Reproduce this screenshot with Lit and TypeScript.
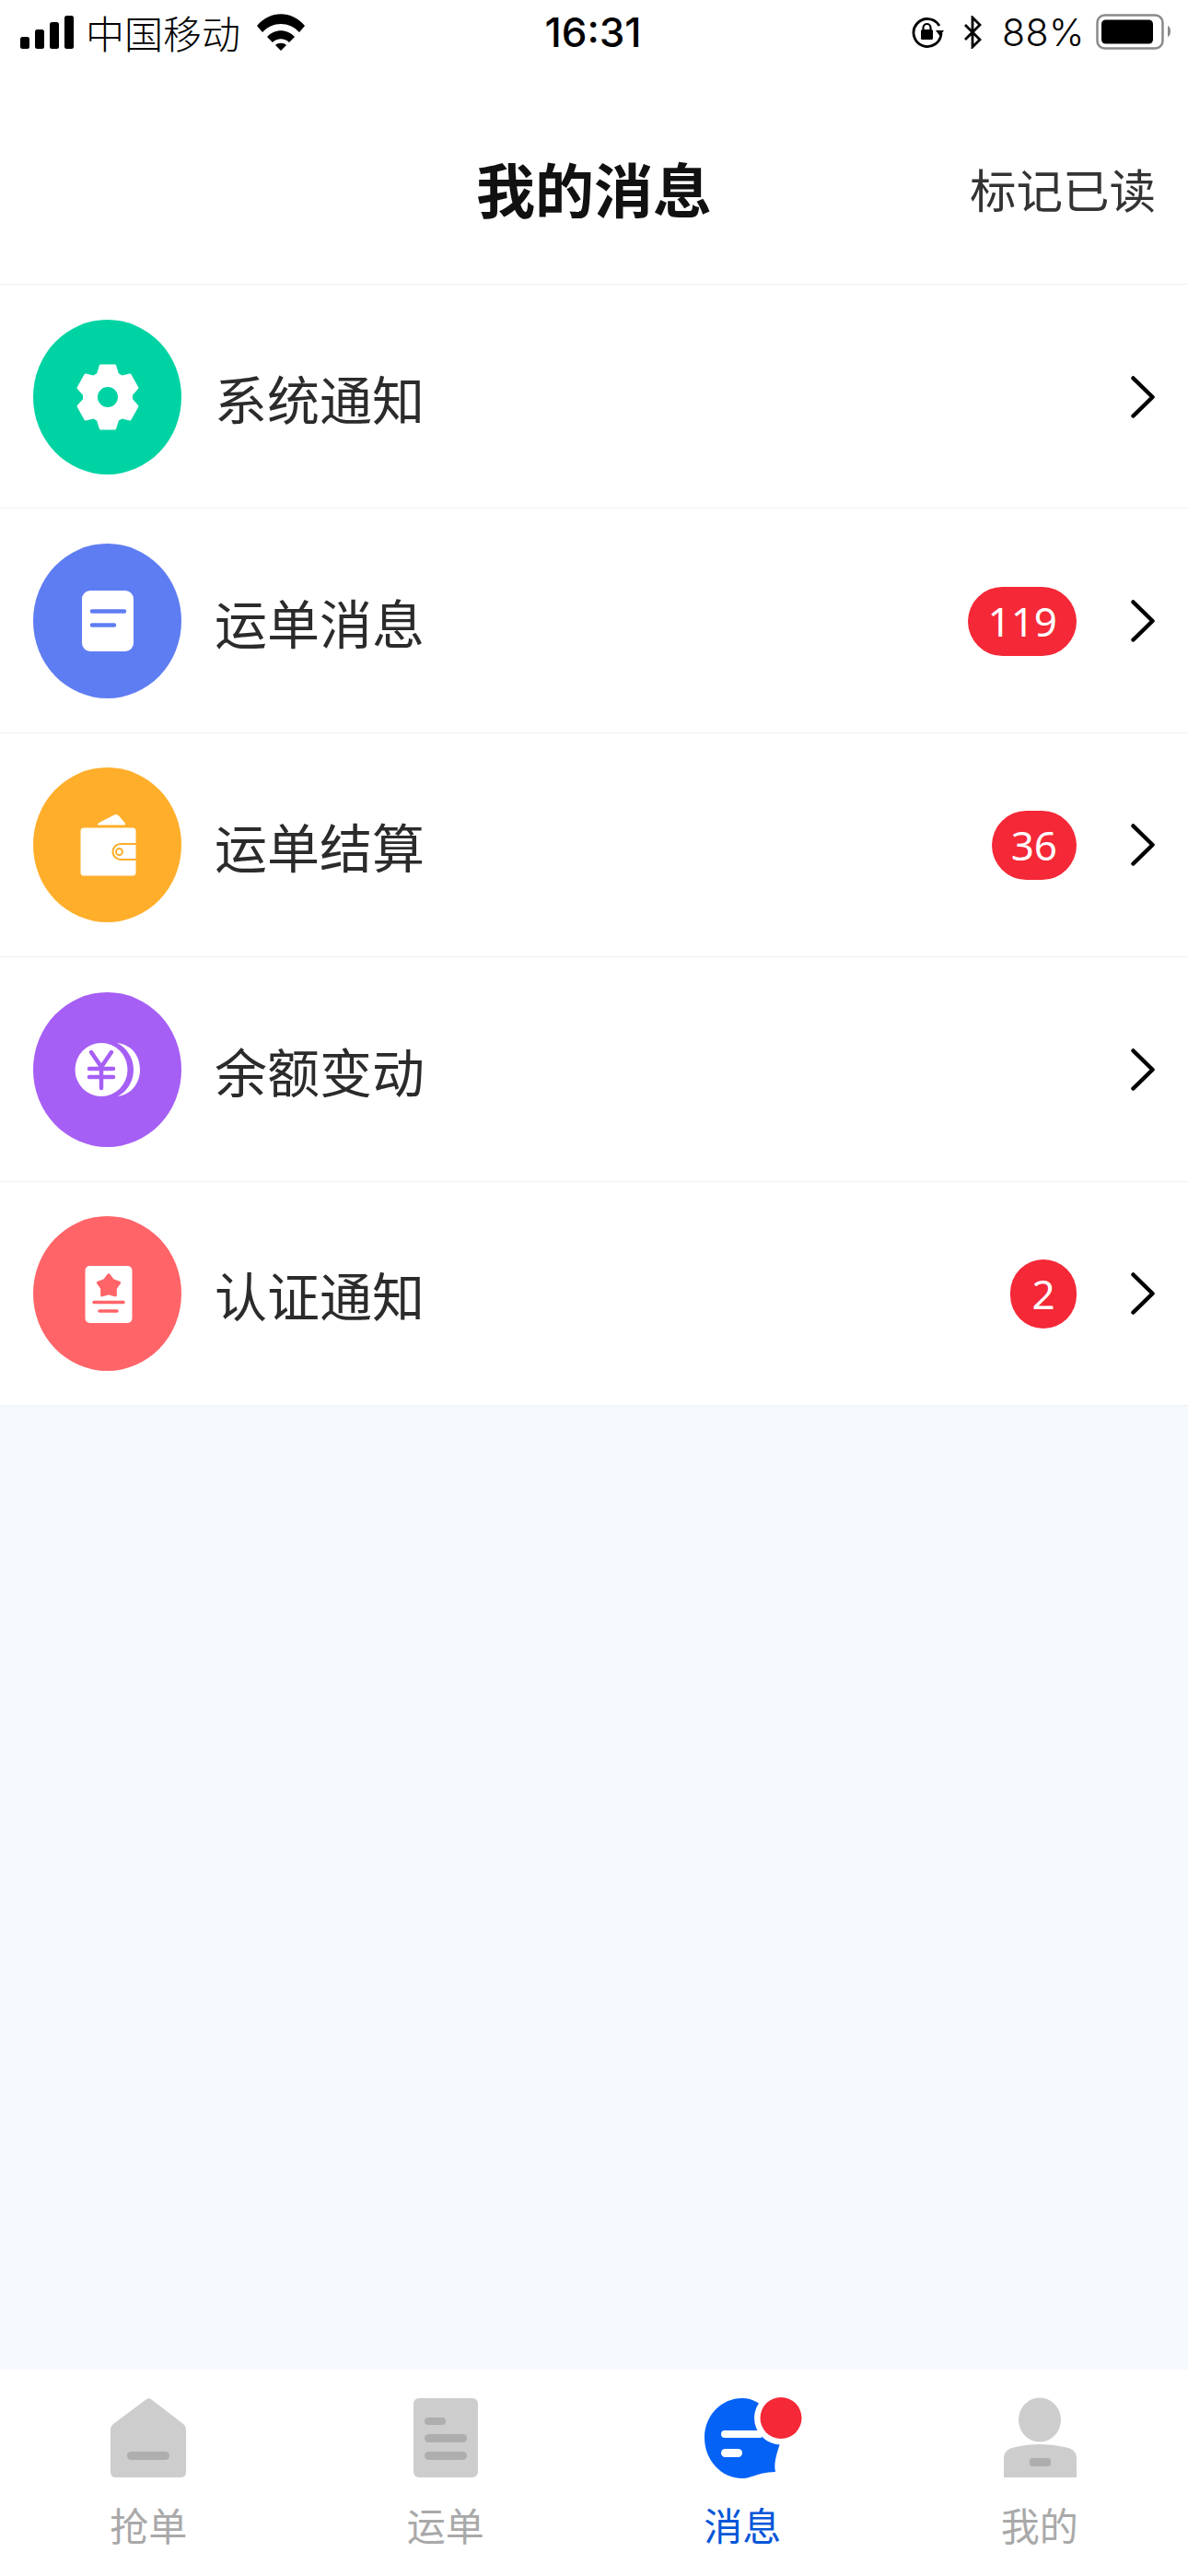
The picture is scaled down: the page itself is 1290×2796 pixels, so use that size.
import { LitElement, html, css, svg } from "lit";
import { customElement } from "lit/decorators.js";

const GEAR = (() => {
  const pts: string[] = [];
  for (let i = 0; i < 6; i++) {
    const a = (i * 60 - 90) * Math.PI / 180;
    const w = 0.235;
    const g = 0.42;
    const R = 35, r = 27;
    const p = (ang: number, rad: number) =>
      `${(40 + rad * Math.cos(ang) * 0.95).toFixed(1)} ${(40 + rad * Math.sin(ang)).toFixed(1)}`;
    pts.push(`${i === 0 ? "M" : "L"}${p(a - g, r)}`, `L${p(a - w, R)}`, `L${p(a + w, R)}`, `L${p(a + g, r)}`);
  }
  return pts.join(" ") + "Z";
})();

const STAR = (() => {
  const out: string[] = [];
  for (let i = 0; i < 10; i++) {
    const a = (i * 36 - 90) * Math.PI / 180;
    const rad = i % 2 === 0 ? 12 : 7.5;
    out.push(`${i === 0 ? "M" : "L"}${(41 + rad * Math.cos(a)).toFixed(1)} ${(32 + rad * Math.sin(a)).toFixed(1)}`);
  }
  return out.join(" ") + "Z";
})();

const ICONS = {
  gear: svg`<svg class="glyph" width="80" height="80" viewBox="0 0 80 80"><path fill-rule="evenodd" fill="#fff" stroke="#fff" stroke-width="3" stroke-linejoin="round" d="${GEAR} M40 27.500a12.500 12.500 0 1 0 0 25a12.500 12.500 0 1 0 0-25Z"/></svg>`,
  doc: svg`<svg class="glyph" width="80" height="80" viewBox="0 0 80 80"><rect x="12" y="7" width="56" height="66" rx="9" fill="#fff"/><path d="M23 29.500H58M23 44.500H47" stroke="#5f7df2" stroke-width="4.500" stroke-linecap="round"/></svg>`,
  wallet: svg`<svg class="glyph" width="80" height="80" viewBox="0 0 80 80"><rect x="10.500" y="21.500" width="60" height="52" rx="3.500" fill="#fff"/><path d="M71 39H54a8.500 8.500 0 0 0 0 17h17" fill="none" stroke="#ffae2b" stroke-width="2"/><circle cx="52.500" cy="47.500" r="3.500" fill="none" stroke="#ffae2b" stroke-width="2"/><path fill="#fff" d="M28.500 18.500q1-2 3-3L47 7.500q3-1.500 5 1L58.500 16q1.500 2.500-1 2.500Z"/></svg>`,
  coin: svg`<svg class="glyph" width="80" height="80" viewBox="0 0 80 80"><ellipse cx="33" cy="40" rx="28.500" ry="29" fill="#fff"/><path fill="#fff" d="M50 11c17 2 25 15 25 29s-9 27-24 29c11-6 17-17 17-29s-7-24-18-29Z"/><path d="M22 21l11 16l11-16M33 37v23M20 39h26M20 48h26" fill="none" stroke="#a65ff5" stroke-width="4.500" stroke-linecap="round" stroke-linejoin="round"/></svg>`,
  cert: svg`<svg class="glyph" width="80" height="80" viewBox="0 0 80 80"><rect x="15.500" y="10" width="51" height="62" rx="5" fill="#fff"/><path d="${STAR}" fill="#ff6468" stroke="#ff6468" stroke-width="3.500" stroke-linejoin="round"/><path d="M25 49.500H57M31 59H50" stroke="#ff6468" stroke-width="3.500" stroke-linecap="round"/></svg>`,
};

const ROWS = [
  { name: "系统通知", color: "#00d3a3", icon: ICONS.gear, badge: "" },
  { name: "运单消息", color: "#5f7df2", icon: ICONS.doc, badge: "119" },
  { name: "运单结算", color: "#ffae2b", icon: ICONS.wallet, badge: "36" },
  { name: "余额变动", color: "#a65ff5", icon: ICONS.coin, badge: "" },
  { name: "认证通知", color: "#ff6468", icon: ICONS.cert, badge: "2" },
];

@customElement("app-root")
export class AppRoot extends LitElement {
  static styles = css`
    :host {
      display: flex;
      flex-direction: column;
      width: 1290px;
      height: 2796px;
      background: #fff;
      font-family: "Noto Sans CJK SC", "Noto Sans", sans-serif;
      overflow: hidden;
    }
    .status {
      height: 70px;
      flex: none;
      display: grid;
      grid-template-columns: 1fr auto 1fr;
      align-items: center;
      color: #000;
      padding: 0 19px 0 22px;
      box-sizing: border-box;
    }
    .status-l { display: flex; align-items: center; gap: 13px; font-size: 42px; font-weight: 300; line-height: 50px; }
    .status-l .wifi { margin-left: 5px; }
    .time { font: 500 44px/50px Inter, "Liberation Sans", sans-serif; margin-right: 5px; }
    .status-r { display: flex; align-items: center; justify-content: flex-end; }
    .pct { font: 300 41px/50px Inter, "Liberation Sans", sans-serif; margin: 0 12px 0 22px; letter-spacing: 0.500px; }
    .bt { margin-left: 21px; }
    .header {
      height: 239px;
      flex: none;
      box-sizing: border-box;
      border-bottom: 1.500px solid #efefef;
      display: grid;
      grid-template-columns: 1fr auto 1fr;
      align-items: center;
      padding: 28px 35px 0;
    }
    .title { grid-column: 2; font-size: 64px; font-weight: 700; color: #111; line-height: 80px; }
    .mark { justify-self: end; font-size: 50.500px; font-weight: 400; color: #333; line-height: 70px; margin-top: 2px; }
    .row {
      height: 243.400px;
      box-sizing: border-box;
      flex: none;
      display: flex;
      align-items: center;
      padding: 1px 36px 0 36px;
      border-bottom: 1.500px solid #f2f2f2;
      background: #fff;
    }
    .row:last-child { border-bottom: 0; }
    .circle {
      width: 161px;
      height: 168px;
      border-radius: 50%;
      flex: none;
      display: flex;
      align-items: center;
      justify-content: center;
    }
    .glyph { display: block; flex: none; }
    .name { margin-left: 36px; flex: 1; font-size: 57px; font-weight: 400; color: #2b2b2b; line-height: 70px; }
    .badge {
      height: 75px;
      min-width: 72px;
      box-sizing: border-box;
      padding: 0 21px;
      border-radius: 38px;
      background: #f42837;
      color: #fff;
      font: 400 44px/75px "Noto Sans", sans-serif;
      text-align: center;
      flex: none;
    }
    .badge.single { padding: 0; }
    .chev { margin-left: 59px; flex: none; display: block; }
    .fill { flex: 1; background: #f6f9fe; }
    .tabs {
      height: 224px;
      flex: none;
      background: #fff;
      display: grid;
      grid-template-columns: repeat(4, 1fr);
    }
    .tab { display: flex; flex-direction: column; align-items: center; padding-top: 30px; }
    .tab svg { display: block; }
    .tab svg.msg { margin-left: 24px; }
    .tab span { margin-top: 25px; font-size: 42px; font-weight: 400; line-height: 50px; color: #a9a9a9; }
    .tab.active span { color: #0556d8; }
  `;

  render() {
    return html`
      <div class="status">
        <div class="status-l">
          <svg width="58" height="36" viewBox="0 0 58 36"><g fill="#000"><rect x="0" y="23" width="10" height="13" rx="2.500"/><rect x="16" y="15" width="10" height="21" rx="2.500"/><rect x="32" y="7" width="10" height="29" rx="2.500"/><rect x="48" y="0" width="10" height="36" rx="2.500"/></g></svg>
          <span>中国移动</span>
          <svg class="wifi" width="52" height="40" viewBox="0 0 52 40"><g fill="#000"><path d="M0 13C14-4 38-4 52 13l-6 7C35 8 17 8 6 20Z"/><path d="M11 25c8-9 22-9 30 0l-6 6c-5-5-13-5-18 0Z"/><path d="M20 34c3-3 9-3 12 0l-6 6Z"/></g></svg>
        </div>
        <div class="time">16:31</div>
        <div class="status-r">
          <svg width="36" height="36" viewBox="0 0 36 36"><path d="M31 11A15 15 0 1 0 33 19" fill="none" stroke="#000" stroke-width="2.800"/><path d="M27 16h9l-4.500 6Z" fill="#000"/><rect x="11" y="15" width="13" height="11" rx="1.500" fill="#000"/><path d="M13.500 16v-3a4 4 0 0 1 8 0v3" fill="none" stroke="#000" stroke-width="2.200"/></svg>
          <svg class="bt" width="20" height="36" viewBox="0 0 20 36"><path d="M2 10l16 16l-8 8V2l8 8L2 26" fill="none" stroke="#000" stroke-width="2.800"/></svg>
          <span class="pct">88%</span>
          <svg width="81" height="40" viewBox="0 0 81 40"><rect x="1.500" y="1.500" width="71" height="36" rx="8" fill="#fff" stroke="#8a8a8a" stroke-width="2.500"/><rect x="6" y="6.500" width="56" height="26" rx="4.500" fill="#000"/><path d="M78 13q3 1 3 6t-3 6Z" fill="#8a8a8a"/></svg>
        </div>
      </div>
      <div class="header">
        <div class="title">我的消息</div>
        <div class="mark">标记已读</div>
      </div>
      ${ROWS.map(
        (r) => html`
          <div class="row">
            <div class="circle" style="background:${r.color}">${r.icon}</div>
            <div class="name">${r.name}</div>
            ${r.badge ? html`<div class="badge ${r.badge.length === 1 ? "single" : ""}">${r.badge}</div>` : ""}
            <svg class="chev" width="26" height="46" viewBox="0 0 26 46"><path d="M2.500 2.500L23.500 23L2.500 43.500" fill="none" stroke="#000" stroke-width="4.500" stroke-linecap="round" stroke-linejoin="round"/></svg>
          </div>
        `
      )}
      <div class="fill"></div>
      <div class="tabs">
        <div class="tab">
          <svg width="100" height="88" viewBox="0 0 100 88"><path d="M47.500 2.500q3-2.500 6 0L88 29q3 2.500 3 6V81q0 6-6 6H15q-6 0-6-6V35q0-3.500 3-6Z" fill="#cdcdcd"/><rect x="27" y="59" width="46" height="9" rx="4.500" fill="#aeaeae"/></svg>
          <span>抢单</span>
        </div>
        <div class="tab">
          <svg width="100" height="88" viewBox="0 0 100 88"><rect x="15" y="1" width="70" height="86" rx="6" fill="#cdcdcd"/><g fill="#aeaeae"><rect x="27" y="22" width="23" height="8" rx="4"/><rect x="27" y="40" width="46" height="9" rx="4.500"/><rect x="27" y="59" width="46" height="9" rx="4.500"/></g></svg>
          <span>运单</span>
        </div>
        <div class="tab active">
          <svg class="msg" width="106" height="88" viewBox="0 0 106 88"><path d="M41 1C18 1 0 20 0 44S18 88 41 88C52 88 55 82 77 81C75 72 78 62 82 50C80 25 64 1 41 1Z" fill="#0562f6"/><circle cx="83" cy="22.500" r="29" fill="#fff"/><circle cx="83" cy="22.500" r="22.500" fill="#f42837"/><g fill="#fff"><path d="M22 36H62V44H22a4 4 0 0 1 0-8Z"/><rect x="18" y="56" width="23" height="9" rx="4.500"/></g></svg>
          <span>消息</span>
        </div>
        <div class="tab">
          <svg width="100" height="88" viewBox="0 0 100 88"><ellipse cx="50" cy="24.500" rx="23" ry="24" fill="#cdcdcd"/><path d="M11 87V66Q11 56 24 54Q36 51 50 51Q64 51 77 54Q90 56 90 66V87Z" fill="#cdcdcd"/><rect x="39" y="66" width="23" height="9" rx="3" fill="#aeaeae"/></svg>
          <span>我的</span>
        </div>
      </div>
    `;
  }
}
